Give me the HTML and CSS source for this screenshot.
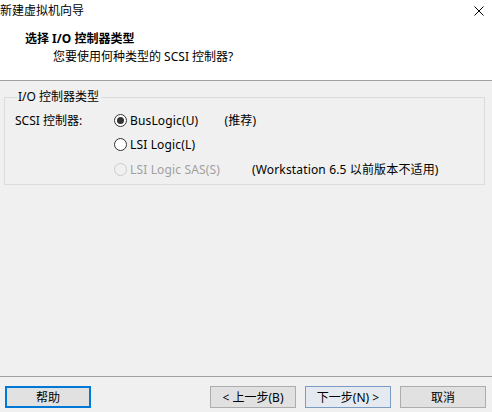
FILE: index.html
```html
<!DOCTYPE html>
<html lang="zh-CN">

<head>
    <meta charset="utf-8">
    <title>新建虚拟机向导</title>
    <link rel="stylesheet" href="styles.css">
</head>

<body>
    <div class="header">
        <div class="titlebar">
            <span class="title">新建虚拟机向导</span>
            <svg class="close" width="10" height="10" viewBox="0 0 10 10">
                <path d="M0.5 0.5 L9.5 9.5 M9.5 0.5 L0.5 9.5" stroke="#000" stroke-width="1" fill="none" />
            </svg>
        </div>
        <h1 class="heading">选择 I/O 控制器类型</h1>
        <p class="subheading">您要使用何种类型的 SCSI 控制器?</p>
    </div>

    <div class="main">
        <fieldset class="group">
            <legend>I/O 控制器类型</legend>
            <div class="row">
                <span class="row-label">SCSI 控制器:</span>
                <span class="radio checked"></span>
                <span class="option">BusLogic(U)</span>
                <span class="note note-rec">(推荐)</span>
            </div>
            <div class="row">
                <span class="row-label"></span>
                <span class="radio"></span>
                <span class="option">LSI Logic(L)</span>
            </div>
            <div class="row row-last">
                <span class="row-label"></span>
                <span class="radio disabled"></span>
                <span class="option option-disabled">LSI Logic SAS(S)</span>
                <span class="note note-ws">(Workstation 6.5 以前版本不适用)</span>
            </div>
        </fieldset>
    </div>

    <div class="footer">
        <button class="btn btn-help">帮助</button>
        <div class="nav">
            <button class="btn">&lt; 上一步(B)</button>
            <button class="btn btn-next">下一步(N) &gt;</button>
            <button class="btn">取消</button>
        </div>
    </div>
</body>

</html>
```

FILE: styles.css
```css
* {
    margin: 0;
    padding: 0;
    box-sizing: border-box;
}

body {
    width: 492px;
    height: 412px;
    display: flex;
    flex-direction: column;
    background-color: #f0f0f0;
    font-family: "Noto Sans", "Noto Sans CJK SC", sans-serif;
    font-size: 12px;
    color: #000;
    overflow: hidden;
}

.header {
    height: 81px;
    background-color: #fff;
    border-bottom: 1px solid #a0a0a0;
}

.titlebar {
    height: 22px;
    display: flex;
    align-items: center;
    justify-content: space-between;
    padding-right: 8px;
}

.title {
    line-height: 22px;
}

.heading {
    margin-top: 8px;
    padding-left: 25px;
    font-size: 12px;
    font-weight: bold;
    line-height: 17px;
}

.subheading {
    margin-top: 1px;
    padding-left: 53px;
    line-height: 17px;
}

.main {
    flex: 1;
    padding: 8px 7px 0 4px;
}

.group {
    border: 1px solid #dcdcdc;
    padding: 3px 0 2px 10px;
}

.group legend {
    margin-left: 3px;
    padding: 0 2px 0 0;
    line-height: 16px;
}

.row {
    height: 24px;
    display: flex;
    align-items: center;
}

.row-last {
    height: 26px;
}

.row-label {
    width: 99px;
}

.option,
.note {
    letter-spacing: 0.15px;
}

.radio {
    width: 13px;
    height: 13px;
    border: 1px solid #333;
    border-radius: 50%;
    background-color: #fff;
    display: flex;
    align-items: center;
    justify-content: center;
    margin-right: 3px;
}

.radio.checked::after {
    content: "";
    width: 7px;
    height: 7px;
    border-radius: 50%;
    background-color: #333;
}

.radio.disabled {
    border-color: #cccccc;
    background-color: #f0f0f0;
}

.option-disabled {
    color: #a0a0a0;
}

.note-rec {
    margin-left: 26px;
}

.note-ws {
    margin-left: 32px;
}

.footer {
    height: 36px;
    border-top: 1px solid #a0a0a0;
    display: flex;
    justify-content: space-between;
    padding: 9px 6px 0 5px;
}

.nav {
    display: flex;
    gap: 9px;
}

.btn {
    width: 86px;
    height: 22px;
    font-family: "Noto Sans", "Noto Sans CJK SC", sans-serif;
    font-size: 12px;
    background-color: #e1e1e1;
    border: 1px solid #adadad;
    color: #000;
}

.btn-help {
    border: 2px solid #0078d7;
}

.btn-next {
    border-color: #7a9cc4;
    background-color: #e5eaf0;
}
```
